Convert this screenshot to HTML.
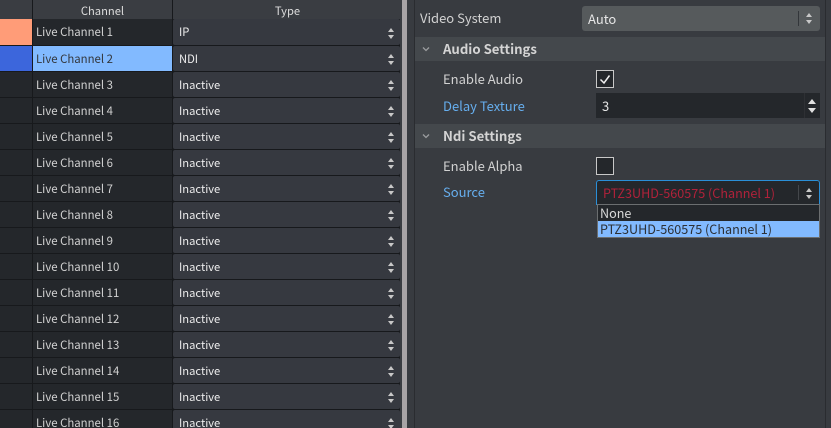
<!DOCTYPE html>
<html><head><meta charset="utf-8">
<style>
html,body{margin:0;padding:0;background:#383b40;}
#p{position:relative;width:831px;height:428px;overflow:hidden;background:#383b40;font-family:"Noto Sans CJK JP","Liberation Sans",sans-serif;font-size:13px;color:#dcdcdc;}
#p div{position:absolute;box-sizing:border-box;white-space:nowrap;}
.h{top:0;height:19px;background:#3a3d42;text-align:center;line-height:22px;font-size:11.2px;}
.a{left:0;width:32px;height:25px;background:#24272b;}
.b{left:33px;width:139px;height:25px;background:#24272b;line-height:27px;padding-left:3px;color:#d2d2d2;font-size:11.4px;}
.c{left:173px;width:227px;height:25px;background:#363940;line-height:27px;padding-left:6px;border-radius:2px;color:#ececec;font-size:11.2px;}
.u{left:388px;width:0;height:0;border-left:3px solid transparent;border-right:3px solid transparent;border-bottom:4px solid #c8c8c8;}
.d{left:388px;width:0;height:0;border-left:3px solid transparent;border-right:3px solid transparent;border-top:4px solid #c8c8c8;}
.s{left:415px;width:410px;height:24px;background:#44484c;line-height:23px;padding-left:28px;font-weight:700;color:#d4d4d4;font-size:13.2px;}
.l{line-height:20px;color:#d2d2d2;}
.bl{color:#66aeee;}
</style></head><body><div id="p">
<div style="left:0;top:0;width:402px;height:428px;background:#17191c"></div>
<div class="h" style="left:0;width:32px"></div>
<div class="h" style="left:33px;width:139px">Channel</div>
<div class="h" style="left:173px;width:229px">Type</div>

<div class="a" style="top:19px;height:26px;background:#ff9c78"></div><div class="b" style="top:19px;height:26px">Live Channel 1</div><div class="c" style="top:19px;height:26px">IP</div><div class="u" style="top:28px"></div><div class="d" style="top:35px"></div>
<div class="a" style="top:46px;background:#3c66dc"></div><div class="b" style="top:46px;background:#82baff;color:#33373c">Live Channel 2</div><div class="c" style="top:46px">NDI</div><div class="u" style="top:54px"></div><div class="d" style="top:61px"></div>
<div class="a" style="top:72px"></div><div class="b" style="top:72px">Live Channel 3</div><div class="c" style="top:72px">Inactive</div><div class="u" style="top:80px"></div><div class="d" style="top:87px"></div>
<div class="a" style="top:98px"></div><div class="b" style="top:98px">Live Channel 4</div><div class="c" style="top:98px">Inactive</div><div class="u" style="top:106px"></div><div class="d" style="top:113px"></div>
<div class="a" style="top:124px"></div><div class="b" style="top:124px">Live Channel 5</div><div class="c" style="top:124px">Inactive</div><div class="u" style="top:132px"></div><div class="d" style="top:139px"></div>
<div class="a" style="top:150px"></div><div class="b" style="top:150px">Live Channel 6</div><div class="c" style="top:150px">Inactive</div><div class="u" style="top:158px"></div><div class="d" style="top:165px"></div>
<div class="a" style="top:176px"></div><div class="b" style="top:176px">Live Channel 7</div><div class="c" style="top:176px">Inactive</div><div class="u" style="top:184px"></div><div class="d" style="top:191px"></div>
<div class="a" style="top:202px"></div><div class="b" style="top:202px">Live Channel 8</div><div class="c" style="top:202px">Inactive</div><div class="u" style="top:210px"></div><div class="d" style="top:217px"></div>
<div class="a" style="top:228px"></div><div class="b" style="top:228px">Live Channel 9</div><div class="c" style="top:228px">Inactive</div><div class="u" style="top:236px"></div><div class="d" style="top:243px"></div>
<div class="a" style="top:254px"></div><div class="b" style="top:254px">Live Channel 10</div><div class="c" style="top:254px">Inactive</div><div class="u" style="top:262px"></div><div class="d" style="top:269px"></div>
<div class="a" style="top:280px"></div><div class="b" style="top:280px">Live Channel 11</div><div class="c" style="top:280px">Inactive</div><div class="u" style="top:288px"></div><div class="d" style="top:295px"></div>
<div class="a" style="top:306px"></div><div class="b" style="top:306px">Live Channel 12</div><div class="c" style="top:306px">Inactive</div><div class="u" style="top:314px"></div><div class="d" style="top:321px"></div>
<div class="a" style="top:332px"></div><div class="b" style="top:332px">Live Channel 13</div><div class="c" style="top:332px">Inactive</div><div class="u" style="top:340px"></div><div class="d" style="top:347px"></div>
<div class="a" style="top:358px"></div><div class="b" style="top:358px">Live Channel 14</div><div class="c" style="top:358px">Inactive</div><div class="u" style="top:366px"></div><div class="d" style="top:373px"></div>
<div class="a" style="top:384px"></div><div class="b" style="top:384px">Live Channel 15</div><div class="c" style="top:384px">Inactive</div><div class="u" style="top:392px"></div><div class="d" style="top:399px"></div>
<div class="a" style="top:410px"></div><div class="b" style="top:410px">Live Channel 16</div><div class="c" style="top:410px">Inactive</div><div class="u" style="top:418px"></div><div class="d" style="top:425px"></div>

<div style="left:400px;top:0;width:2px;height:428px;background:#3a3d42"></div>
<div style="left:402px;top:0;width:5px;height:428px;background:#a8a4a6"></div>
<div style="left:407px;top:0;width:7px;height:428px;background:#383b40"></div>
<div style="left:414px;top:0;width:1px;height:428px;background:#2a2c30"></div>
<div style="left:825px;top:0;width:1px;height:428px;background:#2a2c30"></div>

<div class="l" style="left:420px;top:8px">Video System</div>
<div style="left:582px;top:6px;width:238px;height:25px;background:#565a5c;border-radius:3px;line-height:25px;padding-left:6px;color:#e6e6e6">Auto</div>
<div style="left:798px;top:11px;width:1px;height:15px;background:#33363a"></div>
<div class="u" style="left:806px;top:13px"></div><div class="d" style="left:806px;top:20px"></div>

<div class="s" style="top:37px">Audio Settings</div>
<svg style="position:absolute;left:422px;top:46px" width="8" height="6"><path d="M1 1.5L4 4.5L7 1.5" fill="none" stroke="#9a9c9e" stroke-width="1.3"/></svg>
<div class="l" style="left:443px;top:69px">Enable Audio</div>
<div style="left:596px;top:70px;width:18px;height:18px;background:#24272b;border:1px solid #c8c8c8"></div>
<svg style="position:absolute;left:596px;top:70px" width="18" height="18"><path d="M4.5 9.5L8 13L13.5 5.5" fill="none" stroke="#f0f0f0" stroke-width="1.5"/></svg>
<div class="l bl" style="left:443px;top:96px">Delay Texture</div>
<div style="left:596px;top:93px;width:224px;height:25px;background:#24272b;line-height:25px;padding-left:6px;color:#e6e6e6">3</div>
<div style="left:804px;top:93px;width:1px;height:25px;background:#2e3034"></div>
<div class="u" style="left:808px;top:99px;border-left-width:4px;border-right-width:4px;border-bottom-width:5px;border-bottom-color:#e0e0e0"></div>
<div class="d" style="left:808px;top:108px;border-left-width:4px;border-right-width:4px;border-top-width:5px;border-top-color:#e0e0e0"></div>

<div class="s" style="top:124px">Ndi Settings</div>
<svg style="position:absolute;left:422px;top:133px" width="8" height="6"><path d="M1 1.5L4 4.5L7 1.5" fill="none" stroke="#9a9c9e" stroke-width="1.3"/></svg>
<div class="l" style="left:443px;top:156px">Enable Alpha</div>
<div style="left:596px;top:157px;width:18px;height:18px;background:#24272b;border:1px solid #c8c8c8"></div>
<div class="l bl" style="left:443px;top:182px">Source</div>

<div style="left:596px;top:180px;width:224px;height:25px;background:#24272b;border:1px solid #2a8fd8;border-bottom:0;border-radius:3px 3px 0 0;line-height:24px;padding-left:6px;color:#b0223a;font-size:12.6px">PTZ3UHD-560575 (Channel 1)</div>
<div style="left:798px;top:185px;width:1px;height:15px;background:#44474b"></div>
<div class="u" style="left:806px;top:188px"></div><div class="d" style="left:806px;top:195px"></div>
<div style="left:597px;top:204px;width:223px;height:34px;background:#24272b;border:1px solid #6b6e70"></div>
<div style="left:600px;top:205px;height:16px;line-height:16px;color:#d8d8d8;font-size:12.6px">None</div>
<div style="left:598px;top:221px;width:221px;height:16px;background:#82baff;line-height:16px;padding-left:2px;color:#2c3036;font-size:12.6px">PTZ3UHD-560575 (Channel 1)</div>
</div></body></html>
